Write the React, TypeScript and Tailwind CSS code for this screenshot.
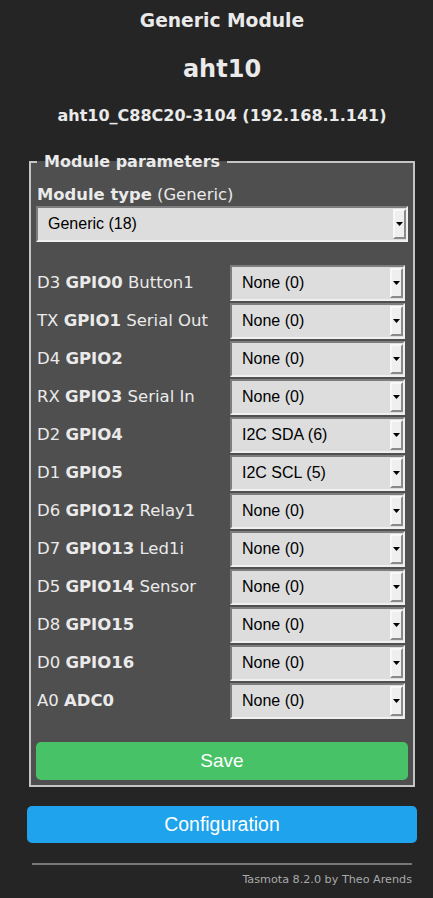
import React from 'react';

const GPIO_ROWS: [string, string, string, string][] = [
  ['D3', 'GPIO0', 'Button1', 'None (0)'],
  ['TX', 'GPIO1', 'Serial Out', 'None (0)'],
  ['D4', 'GPIO2', '', 'None (0)'],
  ['RX', 'GPIO3', 'Serial In', 'None (0)'],
  ['D2', 'GPIO4', '', 'I2C SDA (6)'],
  ['D1', 'GPIO5', '', 'I2C SCL (5)'],
  ['D6', 'GPIO12', 'Relay1', 'None (0)'],
  ['D7', 'GPIO13', 'Led1i', 'None (0)'],
  ['D5', 'GPIO14', 'Sensor', 'None (0)'],
  ['D8', 'GPIO15', '', 'None (0)'],
  ['D0', 'GPIO16', '', 'None (0)'],
  ['A0', 'ADC0', '', 'None (0)'],
];

const Select: React.FC<{ value: string; className?: string }> = ({ value, className }) => (
  <div className={`relative h-[36px] ${className ?? ''}`}>
    <select
      defaultValue={value}
      className="appearance-none w-full h-full bg-[#dddddd] border-2 border-t-[#7d7d7d] border-l-[#7d7d7d] border-b-[#f0f0f0] border-r-[#f0f0f0] pl-[10px] text-[16px] text-black font-['Liberation_Sans',Arial,sans-serif] outline-none rounded-none"
    >
      <option>{value}</option>
    </select>
    {/* fake arrow button */}
    <span className="pointer-events-none absolute right-[2px] top-[3px] bottom-[3px] w-[13px] bg-[#efefef] border-2 border-t-[#f8f8f8] border-l-[#f8f8f8] border-b-[#8a8a8a] border-r-[#8a8a8a] flex items-center justify-center">
      <svg width="7" height="4" viewBox="0 0 7 4">
        <path d="M0 0h7L3.5 4z" fill="#000" />
      </svg>
    </span>
  </div>
);

const App: React.FC = () => {
  return (
    <div className="min-h-[898px] bg-[#252525] text-[#eaeaea] font-['DejaVu_Sans',Verdana,sans-serif]">
      <div className="ml-[27px] w-[390px] pt-[10px]">
        <h3 className="text-center font-bold text-[18.7px] leading-[22px]">Generic Module</h3>
        <h2 className="text-center font-bold text-[24px] leading-[28px] mt-[23px]">aht10</h2>
        <h4 className="text-center font-bold text-[16px] leading-[20px] mt-[23px]">
          aht10_C88C20-3104 (192.168.1.141)
        </h4>

        <fieldset className="mx-[2px] mt-[26px] border-2 border-[#c4c4c4] bg-[#4f4f4f] px-[5px] pb-[5px] pt-0">
          <legend className="ml-[1px] px-[7px] font-bold text-[16px] leading-[19px]">Module parameters</legend>
          <div className="text-left text-[16.4px] leading-[19px] pl-[1px] mt-[14px]">
            <b>Module type</b> (Generic)
          </div>
          <Select value="Generic (18)" className="mt-[2px]" />

          <div className="mt-[23px] flex flex-col gap-[2px]">
            {GPIO_ROWS.map(([pin, gpio, fn, val]) => (
              <div key={gpio} className="flex items-center h-[36px]">
                <div className="flex-1 text-left text-[16.5px] whitespace-nowrap pl-[1px] pt-[1px]">
                  {pin} <b>{gpio}</b>
                  {fn ? ` ${fn}` : ''}
                </div>
                <Select value={val} className="w-[175px] mr-[3px]" />
              </div>
            ))}
          </div>

          <button className="mt-[23px] w-full h-[38px] rounded-[5px] bg-[#47c266] text-white text-[19px] font-['Liberation_Sans',Arial,sans-serif]">
            Save
          </button>
        </fieldset>

        <button className="mt-[19px] w-full h-[37px] rounded-[5px] bg-[#1fa3ec] text-white text-[19.4px] font-['Liberation_Sans',Arial,sans-serif]">
          Configuration
        </button>

        <div className="mx-[5px] mt-[20px] border-t-2 border-[#777777]" />
        <div className="mr-[5px] mt-[7px] text-right text-[11.2px] text-[#aaaaaa]">Tasmota 8.2.0 by Theo Arends</div>
      </div>
    </div>
  );
};

export default App;
